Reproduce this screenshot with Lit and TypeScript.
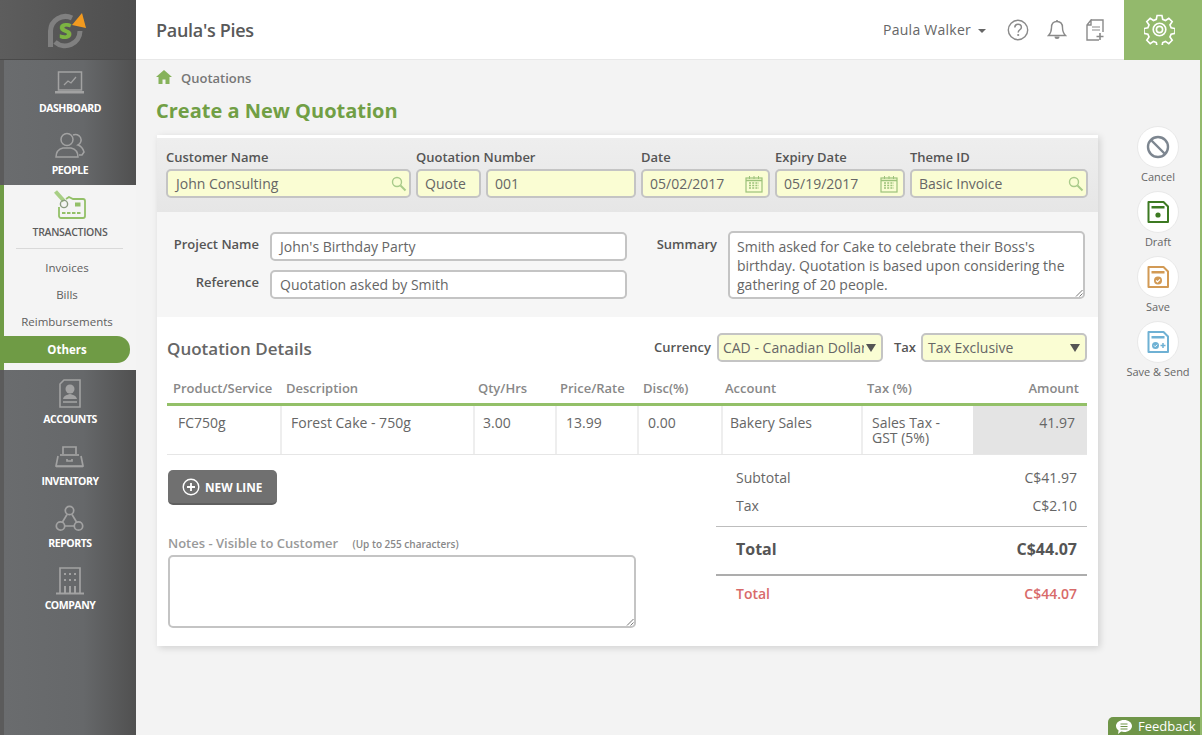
import { LitElement, html, css, svg } from "lit";
import { customElement } from "lit/decorators.js";

const ic = (w: number, h: number, body: unknown, cls = "") =>
  html`<svg class=${cls} width=${w} height=${h} viewBox="0 0 ${w} ${h}" fill="none">${body}</svg>`;

const G = "#a2a2a2";
const navIcons: Record<string, unknown> = {
  dashboard: ic(30, 24, svg`<g stroke=${G} stroke-width="1.5"><rect x="3.500" y="1" width="23" height="18"/><path d="M9 14l4-4 3 2 5-6" stroke-width="1.300"/></g><rect x="0" y="20" width="29" height="2.500" fill=${G}/>`),
  people: ic(30, 26, svg`<g stroke=${G} stroke-width="1.500"><circle cx="12" cy="7.500" r="6"/><path d="M1 25c0-5 3-8 7-9h8c4 1 7 4 7 9z"/><path d="M18 3a5.500 5.500 0 0 1 5 10c3 1 5 3.500 6 7l-2 3h-3"/></g>`),
  accounts: ic(24, 29, svg`<path d="M6 1h16v27H2V5z" stroke=${G} stroke-width="1.600"/><circle cx="12" cy="10" r="4.500" fill=${G}/><path d="M5 20c1-4 4-4 7-5 3 1 6 1 7 5z" fill=${G}/><path d="M5 23h14" stroke=${G} stroke-width="1.600"/>`),
  inventory: ic(30, 23, svg`<g stroke=${G} stroke-width="1.700"><path d="M8 9V2h13v7"/><path d="M5 10h19"/><path d="M3 11L1 21h27l-2-10"/><path d="M1 21.500h27"/><path d="M12 14v2h5v-2"/></g>`),
  reports: ic(30, 27, svg`<g stroke=${G} stroke-width="1.700"><circle cx="14.500" cy="5.500" r="4.200"/><circle cx="5.500" cy="21" r="4.200"/><circle cx="23.500" cy="21" r="4.200"/><path d="M12 9.500L7.500 17M17 9.500l4.500 7.500M10 21h9"/></g>`),
  company: ic(30, 29, svg`<g stroke=${G} stroke-width="1.700"><path d="M5 28V2h20v26"/><path d="M1 27.500h28" stroke-width="2"/></g><g fill=${G}><rect x="9" y="7" width="2" height="2"/><rect x="14" y="7" width="2" height="2"/><rect x="19" y="7" width="2" height="2"/><rect x="9" y="13" width="2" height="2"/><rect x="14" y="13" width="2" height="2"/><rect x="19" y="13" width="2" height="2"/><rect x="9" y="20" width="2" height="7"/><rect x="14" y="20" width="2" height="7"/><rect x="19" y="20" width="2" height="7"/></g>`),
};

const search = ic(16, 16, svg`<circle cx="6" cy="6" r="4.500" stroke="#a9cb8a" stroke-width="1.400"/><path d="M9.500 9.500l5 5" stroke="#a9cb8a" stroke-width="2"/>`, "fi fs");
const calendar = ic(18, 18, svg`<rect x="1" y="3" width="16" height="14" stroke="#9cc27a" stroke-width="1.200"/><path d="M1 5.500h16" stroke="#9cc27a" stroke-width="1.600"/><path d="M4.500 1v3M9 1v3M13.500 1v3" stroke="#9cc27a"/><path d="M4 8h10M4 10.500h10M4 13h10" stroke="#9cc27a" stroke-dasharray="2 1.200" stroke-width="1.400"/>`, "fi fc");
const grip = ic(8, 8, svg`<path d="M1 7.500L7.500 1M4.500 7.500l3-3" stroke="#777" stroke-width="1"/>`, "grip");

const saveShape = (c: string, inner: unknown) => ic(24, 24, svg`<path d="M2.500 2h15l4.500 4.500V22H2.500z" stroke=${c} stroke-width="2" stroke-linejoin="round"/><rect x="5.500" y="6" width="13" height="2.500" fill=${c}/>${inner}`);

@customElement("app-root")
export class AppRoot extends LitElement {
  static styles = css`
    :host { display: block; width: 1202px; height: 735px; overflow: hidden; font-family: "Open Sans", sans-serif; color: #666; background: #f3f3f3; position: relative; }
    * { box-sizing: border-box; }
    .app { display: flex; height: 735px; }
    /* sidebar */
    .side { width: 136px; flex: none; display: flex; flex-direction: column; background: #5b5b5b; }
    .logo { height: 60px; flex: none; display: flex; background: linear-gradient(90deg, #5d5d5d, #4e4e4e); border-bottom: 1px solid #4a4a4a; padding-left: 39px; }
    .dark { margin-left: 4px; background: linear-gradient(90deg, #6a6c6e 0%, #66686a 60%, #505050 100%); padding-top: 1px; }
    .dark.bot { flex: 1; padding-top: 2px; }
    .nav { height: 62px; display: flex; flex-direction: column; align-items: center; }
    .nav .ico { height: 39px; flex: none; display: flex; align-items: flex-end; justify-content: center; padding-bottom: 3px; }
    .nav .ico.dashboard { padding-bottom: 5px; }
    .nav .ico.people { padding-bottom: 4px; }
    .nav .ico.inventory { padding-bottom: 5px; }
    .nav .ico.company { padding-bottom: 2px; }
    .nav .lbl { height: 16px; line-height: 16px; font-size: 10.5px; font-weight: 700; letter-spacing: -.45px; color: #fff; }
    .active { height: 185px; flex: none; background: #f4f4f4; border-left: 4px solid #6f9b45; }
    .active .nav { height: 56px; }
    .active .nav .lbl { color: #5c5c5c; font-weight: 600; letter-spacing: -.3px; }
    .active .rule { height: 1px; background: #d9d9d9; margin: 7px 13px 0 12px; }
    .sub { height: 27px; line-height: 27px; font-size: 11.5px; text-align: center; color: #5e5e5e; font-weight: 500; width: 126px; }
    .subs { padding-top: 5px; }
    .sub.on { background: #6f9b45; color: #fff; font-weight: 700; border-radius: 0 13px 13px 0; margin-top: 1px; }
    /* main */
    .main { flex: 1; display: flex; flex-direction: column; border-right: 2px solid #93b96c; min-width: 0; }
    .top { height: 60px; flex: none; display: flex; align-items: center; background: #fff; border-bottom: 1px solid #e8e8e8; margin-right: -2px; }
    .brand { font-size: 18px; font-weight: 600; color: #595959; margin-left: 20px; flex: 1; letter-spacing: -.3px; }
    .user { font-size: 14px; color: #666; font-weight: 500; letter-spacing: .25px; }
    .caret { width: 0; height: 0; border: 4px solid transparent; border-top-color: #666; border-bottom: 0; margin: 2px 21px 0 7px; }
    .tools { display: flex; gap: 18px; align-items: center; margin-right: 19px; }
    .gear { width: 78px; height: 60px; background: #93b96c; display: flex; align-items: center; justify-content: center; padding-right: 8px; }
    .body { flex: 1; padding: 0 0 0 21px; position: relative; display: flex; flex-direction: column; }
    .crumb { display: flex; align-items: center; height: 36px; font-size: 13px; font-weight: 600; color: #777; margin-left: -1px; }
    .crumb svg { margin-right: 9px; margin-top: -3px; }
    h1 { margin: 0; height: 39px; line-height: 30px; font-size: 20px; font-weight: 700; color: #719f45; margin-left: -1px; }
    .row { display: flex; }
    .card { width: 942px; background: #fff; box-shadow: 2px 2px 7px rgba(0,0,0,.14); height: 511px; }
    /* head band */
    .band { height: 77px; border-top: 3px solid #fff; background: linear-gradient(#eeeeee, #e6e6e6); padding: 11px 0 0 9px; display: flex; gap: 5px; }
    .f label { display: block; height: 16px; line-height: 16px; font-size: 13px; font-weight: 600; color: #555; margin-bottom: 4px; white-space: nowrap; }
    .inp { height: 29px; border: 2px solid #c4c4c4; border-radius: 5px; background: #fafdd3; font-size: 14px; color: #666; line-height: 26px; padding: 0 7px; display: flex; justify-content: space-between; align-items: center; white-space: nowrap; overflow: hidden; }
    .inp.w { background: #fff; }
    .fs { margin-right: -5px; }
    .fc { margin-right: -2px; }
    .w245 { width: 245px; padding-left: 8px; } .w65 { width: 65px; } .w150 { width: 150px; } .w130 { width: 130px; } .w178 { width: 178px; } .w357 { width: 357px; padding-left: 8px; } .w129 { width: 129px; }
    .qn { display: flex; gap: 5px; }
    /* meta */
    .meta { height: 105px; background: #f6f6f6; display: flex; padding-top: 20px; }
    .lc { display: flex; flex-direction: column; gap: 9px; }
    .lr { display: flex; gap: 11px; }
    .ml { font-size: 13px; font-weight: 600; color: #555; text-align: right; line-height: 16px; padding-top: 4px; }
    .ml102 { width: 102px; } .ml79 { width: 79px; margin-left: 11px; }
    .ta { position: relative; border: 2px solid #c4c4c4; border-radius: 5px; background: #fff; font-size: 14px; line-height: 19px; color: #666; padding: 4px 7px; }
    .sum { width: 357px; height: 68px; margin-top: -1px; }
    .grip { position: absolute; right: 0; bottom: 0; }
    /* details */
    .det { padding: 16px 11px 0 10px; }
    .dh { display: flex; align-items: flex-start; height: 29px; }
    h2 { margin: 0; flex: 1; font-size: 17px; line-height: 24px; padding-top: 4px; font-weight: 600; color: #666; }
    .sl { font-size: 13px; font-weight: 600; color: #555; line-height: 29px; white-space: nowrap; }
    .sel { position: relative; height: 29px; border: 2px solid #c4c4c4; border-radius: 5px; background: #fafdd3; font-size: 14px; line-height: 26px; color: #666; padding: 0 0 0 4px; overflow: hidden; white-space: nowrap; }
    .sel::after { content: ""; position: absolute; right: 5px; top: 9px; border: 5px solid transparent; border-top: 8px solid #555; border-bottom: 0; }
    .sel span { display: block; overflow: hidden; }
    .cur { width: 166px; margin: 0 11px 0 6px; } .cur span { width: 141px; }
    .tx { width: 166px; margin-left: 5px; } .tx span { width: 143px; padding-left: 1px; }
    .thead, .tr { display: grid; grid-template-columns: 113px 193px 82px 82px 84px 140px 112px 114px; }
    .thead { height: 41px; border-bottom: 3px solid #93c068; box-sizing: content-box; }
    .th { font-size: 13px; font-weight: 600; color: #888; line-height: 18px; padding: 17px 0 0 6px; white-space: nowrap; }
    .th:nth-child(3), .th:nth-child(4) { padding-left: 5px; }
    .th:nth-child(6) { padding-left: 4px; }
    .th.r { text-align: right; padding: 17px 8px 0 0; }
    .tr { height: 49px; border-bottom: 1px solid #e6e6e6; }
    .td { font-size: 14px; line-height: 14.5px; color: #666; padding: 10px 6px 0 9px; border-left: 2px solid #eee; }
    .td:first-child { border-left: 0; padding-left: 11px; }
    .td:nth-child(3) { padding-left: 8px; }
    .td:nth-child(6) { padding-left: 7px; }
    .td.amt { background: #e4e4e4; text-align: right; padding-right: 12px; border-left: 0; }
    .low { display: flex; justify-content: space-between; padding: 0 0 0 1px; }
    .lcol { width: 468px; }
    .btn { display: flex; align-items: center; width: 109px; height: 35px; margin-top: 15px; padding-top: 1px; border-radius: 5px; background: #707070; border-bottom: 2px solid #5f5f5f; color: #fff; font-size: 11.8px; font-weight: 700; padding-left: 14px; gap: 5px; }
    .nl { margin-top: 29px; height: 18px; line-height: 18px; font-size: 13px; font-weight: 600; color: #999; white-space: nowrap; }
    .nl small { font-size: 10px; font-weight: 600; margin-left: 11px; color: #888; }
    .notes { height: 73px; margin-top: 3px; }
    .rcol { width: 371px; padding-top: 9px; }
    .t { display: flex; justify-content: space-between; padding: 0 10px 0 20px; font-size: 14px; height: 28px; line-height: 28px; color: #666; }
    .t.big { height: 47px; line-height: 44px; font-size: 16px; font-weight: 700; color: #555; border-top: 1px solid #bdbdbd; margin-top: 6px; border-bottom: 2px solid #adadad; box-sizing: content-box; }
    .t.red { color: #d86a6a; font-weight: 600; margin-top: 4px; }
    /* actions */
    .acts { width: 101px; margin: -9px 0 0 18px; display: flex; flex-direction: column; align-items: center; }
    .act { height: 65px; display: flex; flex-direction: column; align-items: center; font-size: 11px; color: #666; font-weight: 500; white-space: nowrap; }
    .circ { width: 42px; height: 42px; flex: none; border-radius: 50%; background: #fff; border: 1px solid #e9e9e9; display: flex; align-items: center; justify-content: center; }
    .act span { line-height: 16px; margin-top: 1px; }
    .fb { position: absolute; right: 0; bottom: 0; width: 92px; height: 18px; background: #6f9548; border-radius: 5px 0 0 0; color: #fff; font-size: 13px; line-height: 20px; display: flex; align-items: center; gap: 5px; padding-left: 7px; overflow: hidden; }
    .fb svg { flex: none; margin-top: 2px; }
  `;

  private nav(key: string, label: string) {
    return html`<div class="nav"><div class="ico ${key}">${navIcons[key]}</div><div class="lbl">${label}</div></div>`;
  }

  render() {
    return html`<div class="app">
      <aside class="side">
        <div class="logo">
          <svg width="50" height="56" viewBox="0 0 50 56" fill="none" stroke="#808080" stroke-width="5">
            <path d="M11.500 47V31A15 15 0 0 1 33 18"/>
            <path d="M41 31A15 15 0 0 1 16 42"/>
            <text x="26.500" y="38.500" text-anchor="middle" font-family="Open Sans" font-weight="800" font-size="23" fill="#7cb342" stroke="none">S</text>
            <path d="M33 25L43 13l4 15z" fill="#f29a1f" stroke="none"/>
          </svg>
        </div>
        <div class="dark">
          ${this.nav("dashboard", "DASHBOARD")}
          ${this.nav("people", "PEOPLE")}
        </div>
        <div class="active">
          <div class="nav">
            <div class="ico" style="padding-bottom:4px">
              <svg width="32" height="30" viewBox="0 0 32 30" fill="none">
                <path d="M12 9l3-2 4 2h10a2 2 0 0 1 2 2v15a2 2 0 0 1-2 2H7a2 2 0 0 1-2-2V17" stroke="#93c068" stroke-width="1.800"/>
                <path d="M1.500 1.500L10 11" stroke="#a8cf85" stroke-width="4"/>
                <circle cx="10" cy="14" r="3.600" stroke="#8a9a80" stroke-width="1.400"/>
                <rect x="21" y="12.500" width="5.500" height="4" fill="#93c068"/>
                <path d="M8 23h20" stroke="#93c068" stroke-width="1.800" stroke-dasharray="3.500 1.500"/>
              </svg>
            </div>
            <div class="lbl">TRANSACTIONS</div>
          </div>
          <div class="rule"></div>
          <div class="subs">
            <div class="sub">Invoices</div>
            <div class="sub">Bills</div>
            <div class="sub">Reimbursements</div>
            <div class="sub on">Others</div>
          </div>
        </div>
        <div class="dark bot">
          ${this.nav("accounts", "ACCOUNTS")}
          ${this.nav("inventory", "INVENTORY")}
          ${this.nav("reports", "REPORTS")}
          ${this.nav("company", "COMPANY")}
        </div>
      </aside>
      <div class="main">
        <header class="top">
          <div class="brand">Paula's Pies</div>
          <div class="user">Paula Walker</div><div class="caret"></div>
          <div class="tools">
            <svg width="22" height="22" viewBox="0 0 22 22" fill="none"><circle cx="11" cy="11" r="9.700" stroke="#8a8a8a" stroke-width="1.400"/><path d="M7.800 8.400c0-4.300 6.600-4.200 6.600-.2 0 2.700-3.200 2.400-3.200 5.200" stroke="#8a8a8a" stroke-width="1.500"/><circle cx="11.200" cy="16" r="1.100" fill="#8a8a8a"/></svg>
            <svg width="20" height="22" viewBox="0 0 20 22" fill="none"><path d="M10 2.500c-4 0-5.500 3-5.500 6 0 4-1 6-3 8h17c-2-2-3-4-3-8 0-3-1.500-6-5.500-6z" stroke="#8a8a8a" stroke-width="1.400"/><path d="M10 1v2" stroke="#8a8a8a" stroke-width="1.600"/><path d="M7.500 17.500a2.500 2.500 0 0 0 5 0z" fill="#8a8a8a"/></svg>
            <svg width="20" height="22" viewBox="0 0 20 22" fill="none"><path d="M6 1h12v12M14 21H2V6l4-5v5H2" stroke="#8a8a8a" stroke-width="1.400"/><path d="M7 8h8M7 11h8" stroke="#8a8a8a" stroke-width="1.200"/><path d="M15 14v7M11.500 17.500h7" stroke="#8a8a8a" stroke-width="1.600"/></svg>
          </div>
          <div class="gear">
            <svg width="31" height="31" viewBox="0 0 32 32" fill="none" stroke="#fff" stroke-width="1.700">
              <path d="M13.500 1.500h5l.8 4 2.900 1.200 3.400-2.300 3.500 3.500-2.300 3.400 1.200 2.900 4 .8v5l-4 .8-1.200 2.900 2.300 3.400-3.500 3.500-3.400-2.300-2.900 1.200-.8 4h-5l-.8-4-2.900-1.200-3.400 2.300-3.500-3.500 2.300-3.400-1.200-2.900-4-.8v-5l4-.8 1.200-2.900-2.300-3.400 3.500-3.500 3.400 2.300 2.900-1.200z"/>
              <circle cx="16" cy="16" r="6.500"/><circle cx="16" cy="16" r="3.200"/>
            </svg>
          </div>
        </header>
        <div class="body">
          <div class="crumb">
            <svg width="16" height="14" viewBox="0 0 16 14"><path d="M8 0L0 7h2.500v7h4V9.500h3V14h4V7H16z" fill="#86b25a"/></svg>
            Quotations
          </div>
          <h1>Create a New Quotation</h1>
          <div class="row">
            <section class="card">
              <div class="band">
                <div class="f"><label>Customer Name</label><div class="inp w245">John Consulting ${search}</div></div>
                <div class="f"><label>Quotation Number</label><div class="qn"><div class="inp w65">Quote</div><div class="inp w150">001</div></div></div>
                <div class="f"><label>Date</label><div class="inp w129">05/02/2017 ${calendar}</div></div>
                <div class="f"><label>Expiry Date</label><div class="inp w130">05/19/2017 ${calendar}</div></div>
                <div class="f"><label>Theme ID</label><div class="inp w178">Basic Invoice ${search}</div></div>
              </div>
              <div class="meta">
                <div class="lc">
                  <div class="lr"><div class="ml ml102">Project Name</div><div class="inp w w357">John's Birthday Party</div></div>
                  <div class="lr"><div class="ml ml102">Reference</div><div class="inp w w357">Quotation asked by Smith</div></div>
                </div>
                <div class="lr">
                  <div class="ml ml79">Summary</div>
                  <div class="ta sum">Smith asked for Cake to celebrate their Boss's birthday. Quotation is based upon considering the gathering of 20 people.${grip}</div>
                </div>
              </div>
              <div class="det">
                <div class="dh">
                  <h2>Quotation Details</h2>
                  <div class="sl">Currency</div>
                  <div class="sel cur"><span>CAD - Canadian Dollar</span></div>
                  <div class="sl">Tax</div>
                  <div class="sel tx"><span>Tax Exclusive</span></div>
                </div>
                <div class="thead">
                  <div class="th">Product/Service</div><div class="th">Description</div><div class="th">Qty/Hrs</div><div class="th">Price/Rate</div><div class="th">Disc(%)</div><div class="th">Account</div><div class="th">Tax (%)</div><div class="th r">Amount</div>
                </div>
                <div class="tr">
                  <div class="td">FC750g</div><div class="td">Forest Cake - 750g</div><div class="td">3.00</div><div class="td">13.99</div><div class="td">0.00</div><div class="td">Bakery Sales</div><div class="td">Sales Tax - GST (5%)</div><div class="td amt">41.97</div>
                </div>
                <div class="low">
                  <div class="lcol">
                    <div class="btn">
                      <svg width="18" height="18" viewBox="0 0 18 18" fill="none" stroke="#fff"><circle cx="9" cy="9" r="7.800" stroke-width="1.400"/><path d="M9 5v8M5 9h8" stroke-width="1.800"/></svg>
                      NEW LINE
                    </div>
                    <div class="nl">Notes - Visible to Customer <small>(Up to 255 characters)</small></div>
                    <div class="ta notes">${grip}</div>
                  </div>
                  <div class="rcol">
                    <div class="t"><span>Subtotal</span><span>C$41.97</span></div>
                    <div class="t"><span>Tax</span><span>C$2.10</span></div>
                    <div class="t big"><span>Total</span><span>C$44.07</span></div>
                    <div class="t red"><span>Total</span><span>C$44.07</span></div>
                  </div>
                </div>
              </div>
            </section>
            <div class="acts">
              <div class="act"><div class="circ"><svg width="24" height="24" viewBox="0 0 24 24" fill="none" stroke="#7d8690" stroke-width="2.400"><circle cx="12" cy="12" r="10"/><path d="M5 5l14 14"/></svg></div><span>Cancel</span></div>
              <div class="act"><div class="circ">${saveShape("#3d7a22", svg`<circle cx="12" cy="15" r="2.600" fill="#3d7a22"/>`)}</div><span>Draft</span></div>
              <div class="act"><div class="circ">${saveShape("#d29a55", svg`<circle cx="12" cy="15.500" r="4" fill="#d29a55"/><path d="M10 15.500l1.500 1.500 2.500-2.500" stroke="#fff" stroke-width="1.100"/>`)}</div><span>Save</span></div>
              <div class="act"><div class="circ">${saveShape("#6fb1d4", svg`<circle cx="9.500" cy="15.500" r="3.500" fill="#6fb1d4"/><path d="M8 15.500l1.200 1.200 2-2" stroke="#fff"/><path d="M17 13v5M14.500 15.500h5" stroke="#6fb1d4" stroke-width="1.500"/>`)}</div><span>Save &amp; Send</span></div>
            </div>
          </div>
          <div class="fb">
            <svg width="18" height="16" viewBox="0 0 18 16"><path d="M9 1c4.500 0 8 2.600 8 6s-3.500 6-8 6c-1 0-2-.1-2.800-.4L3 15l.6-3.500C2 10.400 1 8.800 1 7c0-3.400 3.500-6 8-6z" fill="#fff"/><path d="M5.500 5h7M5.500 7.500h7M5.500 10h7" stroke="#6f9548" stroke-width="1"/></svg>
            Feedback
          </div>
        </div>
      </div>
    </div>`;
  }
}
